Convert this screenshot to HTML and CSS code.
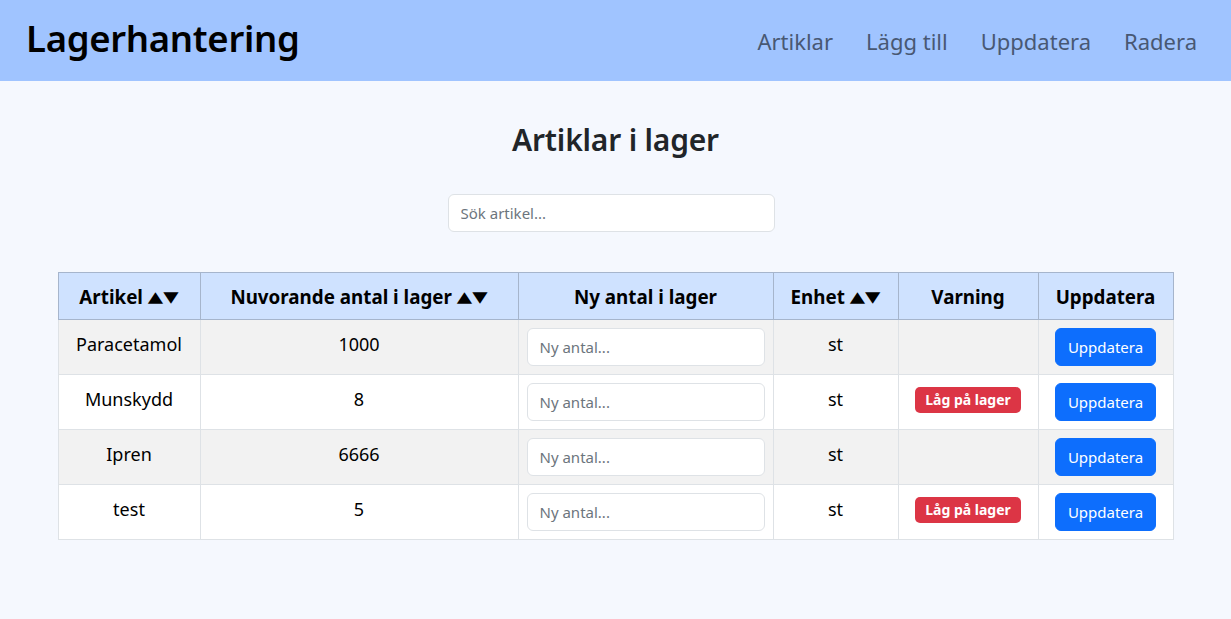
FILE: index.html
```html
<!DOCTYPE html>
<html lang="sv">
<head>
<meta charset="utf-8">
<title>Lagerhantering</title>
<link rel="stylesheet" href="styles.css">
</head>
<body>
<header class="navbar">
  <a class="brand" href="#">Lagerhantering</a>
  <nav class="nav">
    <a class="nav-link" href="#">Artiklar</a>
    <a class="nav-link" href="#">Lägg till</a>
    <a class="nav-link" href="#">Uppdatera</a>
    <a class="nav-link" href="#">Radera</a>
  </nav>
</header>
<main class="container">
  <h2 class="page-title">Artiklar i lager</h2>
  <div class="search-wrap">
    <input class="form-control search" type="text" placeholder="Sök artikel...">
  </div>
  <table class="table">
    <colgroup>
      <col class="c1"><col class="c2"><col class="c3"><col class="c4"><col class="c5"><col class="c6">
    </colgroup>
    <thead>
      <tr>
        <th>Artikel <span class="sort">▲▼</span></th>
        <th>Nuvorande antal i lager <span class="sort">▲▼</span></th>
        <th>Ny antal i lager</th>
        <th>Enhet <span class="sort">▲▼</span></th>
        <th>Varning</th>
        <th>Uppdatera</th>
      </tr>
    </thead>
    <tbody>
      <tr class="odd">
        <td>Paracetamol</td>
        <td>1000</td>
        <td><input class="form-control" type="number" placeholder="Ny antal..."></td>
        <td>st</td>
        <td></td>
        <td><button class="btn">Uppdatera</button></td>
      </tr>
      <tr>
        <td>Munskydd</td>
        <td>8</td>
        <td><input class="form-control" type="number" placeholder="Ny antal..."></td>
        <td>st</td>
        <td><span class="badge">Låg på lager</span></td>
        <td><button class="btn">Uppdatera</button></td>
      </tr>
      <tr class="odd">
        <td>Ipren</td>
        <td>6666</td>
        <td><input class="form-control" type="number" placeholder="Ny antal..."></td>
        <td>st</td>
        <td></td>
        <td><button class="btn">Uppdatera</button></td>
      </tr>
      <tr>
        <td>test</td>
        <td>5</td>
        <td><input class="form-control" type="number" placeholder="Ny antal..."></td>
        <td>st</td>
        <td><span class="badge">Låg på lager</span></td>
        <td><button class="btn">Uppdatera</button></td>
      </tr>
    </tbody>
  </table>
</main>
</body>
</html>
```
FILE: styles.css
```css
* { box-sizing: border-box; }

html, body {
  margin: 0;
  padding: 0;
}

body {
  font-family: "Noto Sans", "Open Sans", sans-serif;
  color: #212529;
  background: #f5f8fe;
  font-size: 15px;
  line-height: 1.5;
}

.navbar {
  height: 81px;
  background: #a0c4ff;
  display: flex;
  align-items: center;
  justify-content: space-between;
  padding: 0 34px 0 26px;
}

.brand {
  font-size: 36.5px;
  font-weight: 600;
  letter-spacing: -0.3px;
  color: #000;
  text-decoration: none;
  line-height: 1.2;
  margin-top: -3px;
}

.nav {
  display: flex;
  gap: 33px;
  margin-top: 2px;
}

.nav-link {
  font-size: 22px;
  color: #485873;
  text-decoration: none;
}

.container {
  width: 1140px;
  margin: 0 auto;
  padding: 39px 12px 0;
}

.page-title {
  margin: 0;
  text-align: center;
  font-size: 30px;
  font-weight: 600;
  line-height: 40px;
  letter-spacing: -0.2px;
  color: #212529;
}

.search-wrap {
  display: flex;
  justify-content: center;
  margin: 34px 9px 40px 0;
}

.form-control {
  display: block;
  width: 100%;
  height: 38px;
  padding: 6px 12px;
  font-family: inherit;
  font-size: 15px;
  color: #212529;
  background: #fff;
  border: 1px solid #dee2e6;
  border-radius: 6px;
  outline: none;
}

.form-control::placeholder {
  color: #6c757d;
}

.search {
  width: 327px;
}

.table {
  width: 100%;
  border-collapse: collapse;
  table-layout: fixed;
  font-size: 18px;
  color: #000;
}

.c1 { width: 142px; }
.c2 { width: 318px; }
.c3 { width: 255px; }
.c4 { width: 125px; }
.c5 { width: 140px; }
.c6 { width: 135px; }

.table th,
.table td {
  padding: 8px;
  line-height: 32px;
  text-align: center;
  vertical-align: top;
  border: 1px solid #dee2e6;
}

.table thead th {
  height: 47px;
  padding: 9px 8px 7px;
  font-size: 18.8px;
  line-height: 28.8px;
  background: #cfe2ff;
  border-color: #a6b5cc;
  font-weight: 700;
  vertical-align: middle;
}

.sort {
  display: inline-block;
  font-family: "DejaVu Sans", sans-serif;
  font-size: 20px;
  line-height: 1;
  letter-spacing: 0;
  transform: scaleY(0.75);
}

.table tbody tr {
  background: #fff;
}

.table tbody tr.odd {
  background: #f2f2f2;
}

.btn {
  display: inline-block;
  height: 38px;
  padding: 6px 12px;
  font-family: inherit;
  font-size: 15px;
  line-height: 24px;
  color: #fff;
  background: #0d6efd;
  border: 1px solid #0d6efd;
  border-radius: 6px;
}

.badge {
  display: inline-block;
  padding: 6px 10px;
  font-size: 14px;
  font-weight: 700;
  line-height: 1;
  color: #fff;
  background: #dc3545;
  border-radius: 5px;
  vertical-align: 1px;
}
```
